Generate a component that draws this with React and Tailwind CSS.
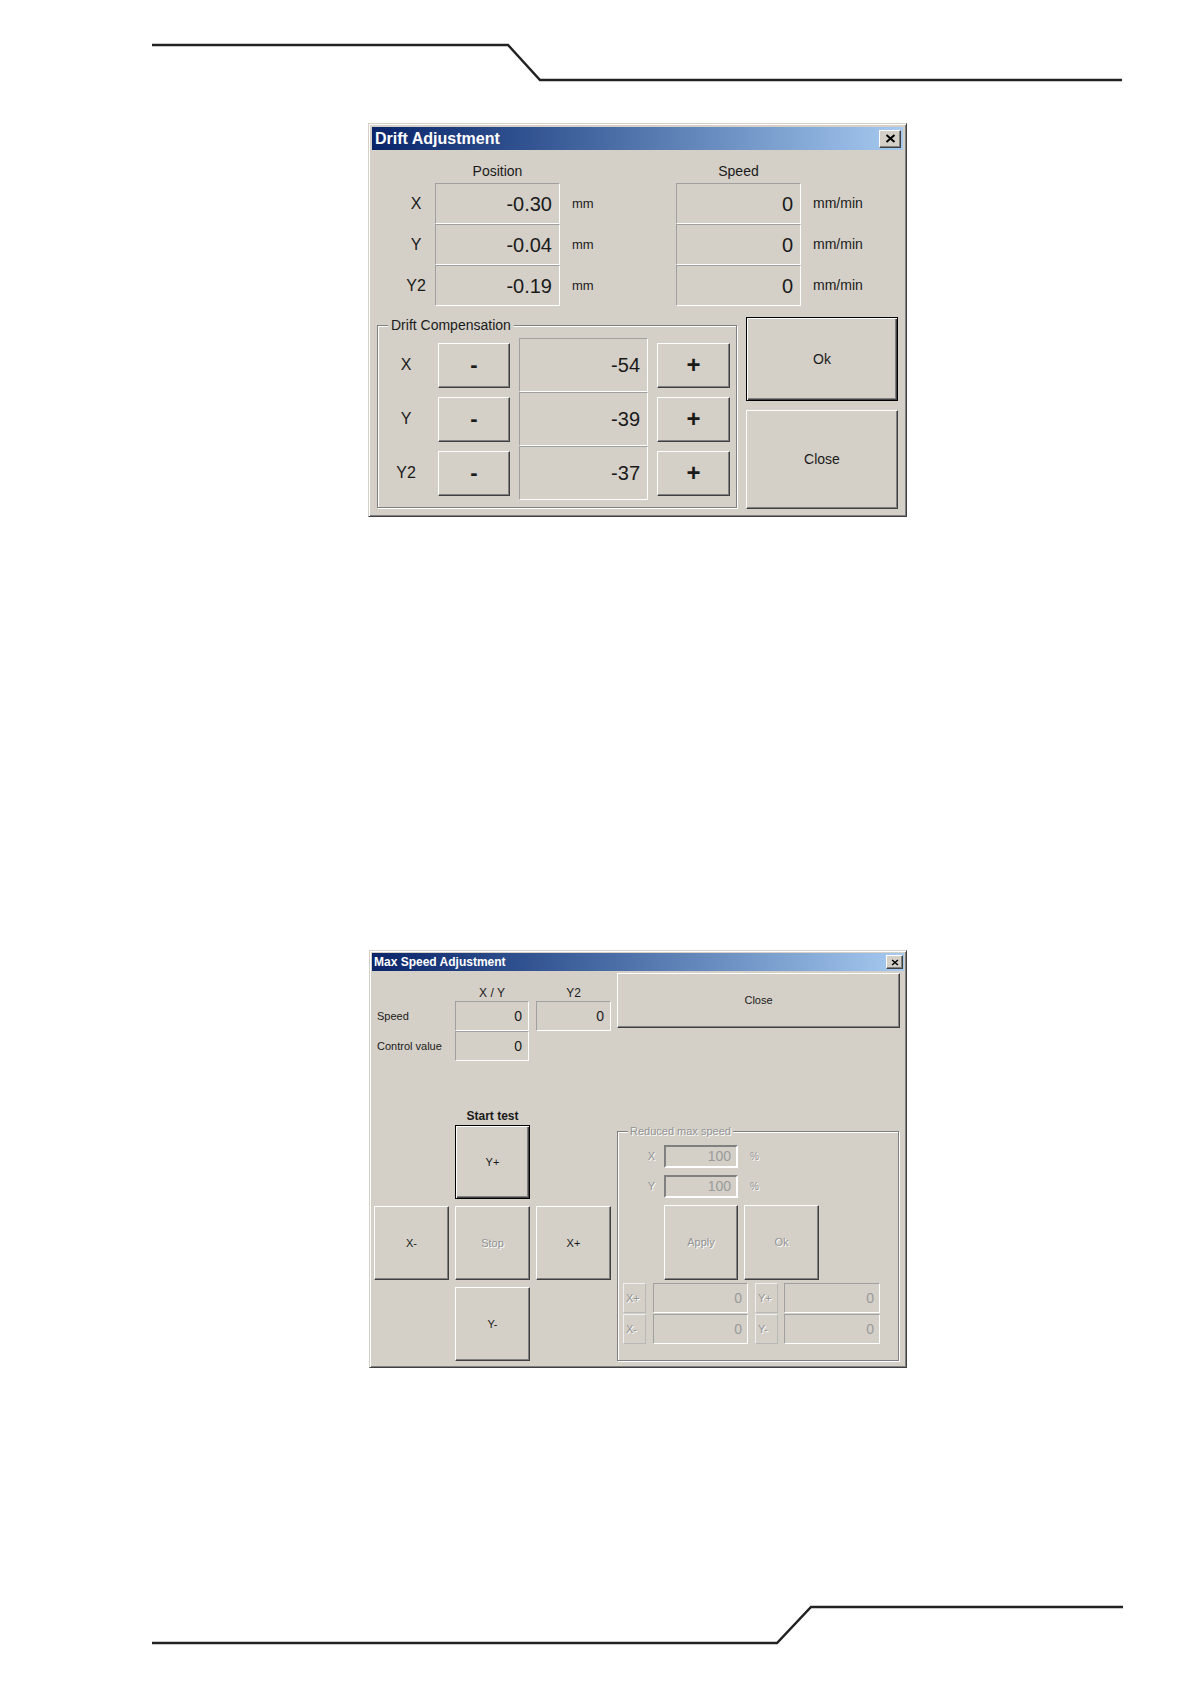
const frame =
  "border border-t-[#d4d0c8] border-l-[#d4d0c8] border-r-[#404040] border-b-[#404040] shadow-[inset_1px_1px_0_#fff,inset_-1px_-1px_0_#808080]";
const raised =
  "border border-t-white border-l-white border-r-[#404040] border-b-[#404040] shadow-[inset_-1px_-1px_0_#808080] bg-[#d4d0c8]";
const defaultBtn =
  "border border-black shadow-[inset_1px_1px_0_#fff,inset_-1px_-1px_0_#404040,inset_-2px_-2px_0_#808080] bg-[#d4d0c8]";
const sunken =
  "border border-t-[#a0a0a0] border-l-[#a0a0a0] border-r-white border-b-white";
const etched = "border border-[#808080] shadow-[inset_1px_1px_0_#fff,1px_1px_0_#fff]";
const disabledText = "text-[#939393] [text-shadow:1px_1px_0_#fff]";

const CloseBox = ({ small }) => (
  <div
    className={`${raised} flex items-center justify-center ${
      small ? "w-[17px] h-[14px]" : "w-[22px] h-[18px]"
    }`}
  >
    <svg width={small ? 8 : 11} height={small ? 7 : 9} viewBox="0 0 11 9">
      <path d="M1.5 1 L9.5 8 M9.5 1 L1.5 8" stroke="#000" strokeWidth="2" />
    </svg>
  </div>
);

const Field = ({ w, h = "h-full", size = "text-[14px]", pr = "pr-[6px]", children, cls = "" }) => (
  <div className={`${w} ${h} ${sunken} flex items-center justify-end ${pr} ${size} ${cls}`}>
    {children}
  </div>
);

const driftRows = [
  { label: "X", pos: "-0.30", speed: "0" },
  { label: "Y", pos: "-0.04", speed: "0" },
  { label: "Y2", pos: "-0.19", speed: "0" },
];

const compRows = [
  { label: "X", value: "-54" },
  { label: "Y", value: "-39" },
  { label: "Y2", value: "-37" },
];

function DriftAdjustment() {
  return (
    <div className={`ml-[368px] mt-[33px] w-[539px] h-[394px] bg-[#d4d0c8] p-[3px] ${frame}`}>
      <div className="h-[23px] flex items-center justify-between bg-linear-to-r from-[#0a246a] to-[#a6caf0] pl-[3px] pr-[2px]">
        <span className="text-white font-bold text-[16px] leading-[18px]">Drift Adjustment</span>
        <CloseBox />
      </div>

      <div className="flex h-[33px] items-end pb-[4px] text-[14px] leading-[16px]">
        <div className="w-[63px]" />
        <div className="w-[125px] text-center">Position</div>
        <div className="w-[116px]" />
        <div className="w-[125px] text-center">Speed</div>
      </div>

      {driftRows.map((r) => (
        <div key={r.label} className="flex h-[41px] items-center">
          <div className="w-[63px] pl-[34px]">
            <span className="block w-[20px] text-center text-[16px]">{r.label}</span>
          </div>
          <Field w="w-[125px]" size="text-[20px]" pr="pr-[7px]">
            {r.pos}
          </Field>
          <div className="w-[116px] pl-[12px] text-[13px]">mm</div>
          <Field w="w-[125px]" size="text-[20px]" pr="pr-[7px]">
            {r.speed}
          </Field>
          <div className="pl-[12px] text-[14px]">mm/min</div>
        </div>
      ))}

      <div className="mt-[11px] flex">
        <div className={`relative ml-[5px] mt-[8px] w-[360px] h-[183px] pt-[12px] ${etched}`}>
          <span className="absolute left-[10px] top-[-9px] bg-[#d4d0c8] px-[3px] text-[14px] leading-[16px]">
            Drift Compensation
          </span>
          {compRows.map((r) => (
            <div key={r.label} className="flex h-[54px] items-center">
              <div className="w-[56px] text-center text-[16px]">{r.label}</div>
              <button className={`ml-[4px] w-[72px] h-[45px] ${raised} text-[22px] font-bold leading-none`}>
                -
              </button>
              <Field w="w-[129px]" cls="ml-[9px]" size="text-[20px]" pr="pr-[7px]">
                {r.value}
              </Field>
              <button className={`ml-[9px] w-[73px] h-[45px] ${raised} text-[24px] font-bold leading-none`}>
                +
              </button>
            </div>
          ))}
        </div>
        <div className="ml-[9px] w-[152px] flex flex-col">
          <button className={`h-[84px] ${defaultBtn} text-[14px]`}>Ok</button>
          <button className={`mt-[9px] h-[99px] ${raised} text-[14px]`}>Close</button>
        </div>
      </div>
    </div>
  );
}

const PadBtn = ({ children, def, disabled }) => (
  <button
    className={`w-[75px] h-[74px] ${def ? defaultBtn : raised} text-[11px] ${disabled ? disabledText : ""}`}
  >
    {children}
  </button>
);

function MaxSpeedAdjustment() {
  return (
    <div className={`ml-[369px] mt-[433px] w-[538px] h-[418px] bg-[#d4d0c8] p-[2px] ${frame}`}>
      <div className="h-[18px] flex items-center justify-between bg-linear-to-r from-[#0a246a] to-[#a6caf0] pl-[2px] pr-[1px]">
        <span className="text-white font-bold text-[12px] leading-[14px]">Max Speed Adjustment</span>
        <CloseBox small />
      </div>

      <div className="flex">
        <div className="w-[239px]">
          <div className="flex h-[30px] items-end pb-[1px] text-[12px] leading-[14px]">
            <div className="w-[83px]" />
            <div className="w-[74px] text-center">X / Y</div>
            <div className="w-[7px]" />
            <div className="w-[75px] text-center">Y2</div>
          </div>
          <div className="flex h-[30px] items-center">
            <div className="w-[83px] pl-[5px] text-[11px]">Speed</div>
            <Field w="w-[74px]">0</Field>
            <div className="w-[7px]" />
            <Field w="w-[75px]">0</Field>
          </div>
          <div className="flex h-[30px] items-center">
            <div className="w-[83px] pl-[5px] text-[11px]">Control value</div>
            <Field w="w-[74px]">0</Field>
          </div>
        </div>
        <button className={`ml-[6px] mt-[2px] w-[283px] h-[55px] ${raised} text-[11px]`}>Close</button>
      </div>

      <div className="flex">
        <div className="w-[239px] pl-[2px] pt-[47px]">
          <div className="ml-[81px] w-[75px] text-center font-bold text-[12px] leading-[16px]">Start test</div>
          <div className="mt-[1px] grid grid-cols-[75px_75px_75px] grid-rows-[74px_74px_74px] gap-x-[6px] gap-y-[7px]">
            <div />
            <PadBtn def>Y+</PadBtn>
            <div />
            <PadBtn>X-</PadBtn>
            <PadBtn disabled>Stop</PadBtn>
            <PadBtn>X+</PadBtn>
            <div />
            <PadBtn>Y-</PadBtn>
            <div />
          </div>
        </div>

        <div className={`relative ml-[6px] mt-[70px] w-[282px] h-[230px] pt-[13px] ${etched}`}>
          <span className={`absolute left-[10px] top-[-8px] bg-[#d4d0c8] px-[2px] text-[11px] leading-[14px] ${disabledText}`}>
            Reduced max speed
          </span>
          {["X", "Y"].map((l, i) => (
            <div key={l} className={`flex h-[23px] items-center ${i ? "mt-[7px]" : ""}`}>
              <div className={`w-[46px] pr-[9px] text-right text-[11px] ${disabledText}`}>{l}</div>
              <div className="w-[74px] h-full border-2 border-t-[#808080] border-l-[#808080] border-r-white border-b-white flex items-center justify-end pr-[5px] text-[14px] text-[#9a9a9a]">
                100
              </div>
              <div className={`ml-[12px] text-[10px] ${disabledText}`}>%</div>
            </div>
          ))}
          <div className="mt-[7px] ml-[46px] flex">
            <button className={`w-[74px] h-[75px] ${raised} text-[11px] ${disabledText}`}>Apply</button>
            <button className={`ml-[6px] w-[75px] h-[75px] ${raised} text-[11px] ${disabledText}`}>Ok</button>
          </div>
          {[
            ["X+", "Y+"],
            ["X-", "Y-"],
          ].map(([a, b], i) => (
            <div key={a} className={`flex h-[30px] ${i ? "mt-[1px]" : "mt-[3px]"}`}>
              <div className={`ml-[5px] w-[23px] h-full border border-[#efefef] border-r-[#b8b8b8] border-b-[#b8b8b8] flex items-center pl-[2px] text-[11px] ${disabledText}`}>
                {a}
              </div>
              <Field w="w-[95px]" cls="ml-[7px] text-[#9a9a9a]" pr="pr-[5px]">
                0
              </Field>
              <div className={`ml-[7px] w-[23px] h-full border border-[#efefef] border-r-[#b8b8b8] border-b-[#b8b8b8] flex items-center pl-[2px] text-[11px] ${disabledText}`}>
                {b}
              </div>
              <Field w="w-[96px]" cls="ml-[6px] text-[#9a9a9a]" pr="pr-[5px]">
                0
              </Field>
            </div>
          ))}
        </div>
      </div>
    </div>
  );
}

export default function App() {
  return (
    <div className="w-[1191px] h-[1684px] overflow-hidden bg-white text-[#1a1a1a] font-['Liberation_Sans',Arial,sans-serif]">
      <svg className="block" width="1191" height="90" viewBox="0 0 1191 90">
        <polyline points="152,45 508,45 540,80 1122,80" fill="none" stroke="#222" strokeWidth="2.5" />
      </svg>
      <DriftAdjustment />
      <MaxSpeedAdjustment />
      <svg className="block mt-[232px]" width="1191" height="84" viewBox="0 0 1191 84">
        <polyline points="152,43 777,43 811,7 1123,7" fill="none" stroke="#222" strokeWidth="2.5" />
      </svg>
    </div>
  );
}
